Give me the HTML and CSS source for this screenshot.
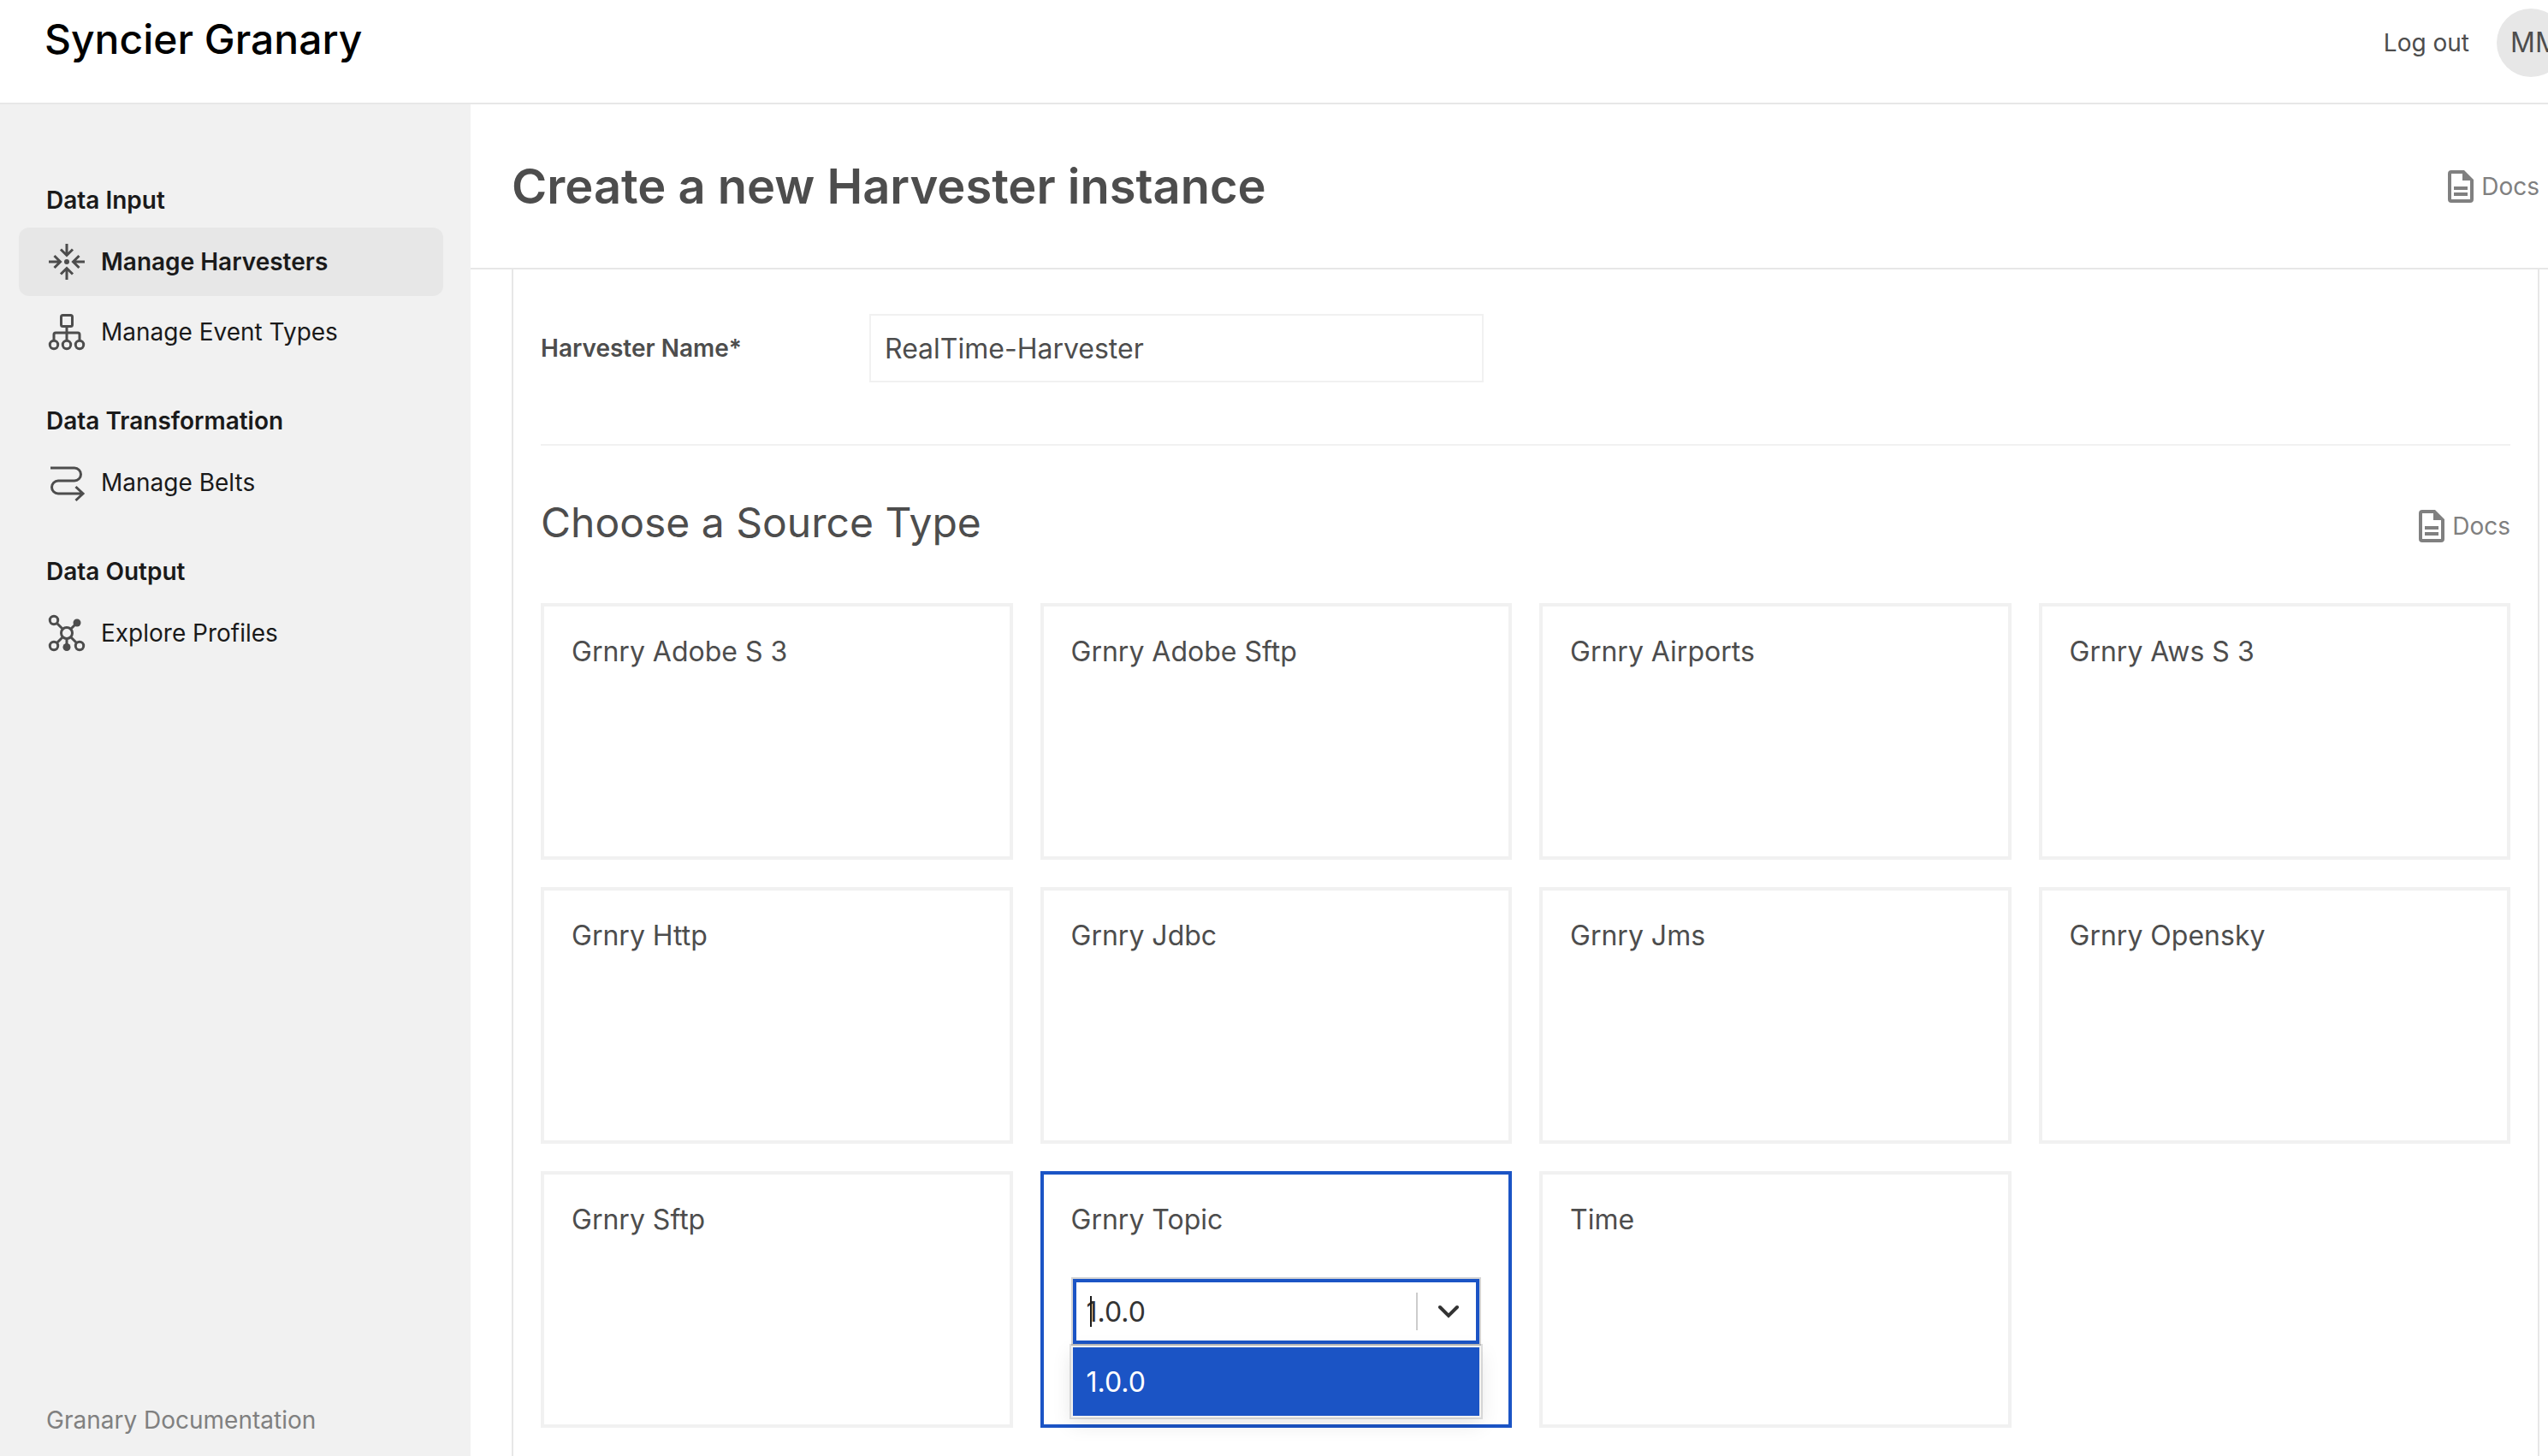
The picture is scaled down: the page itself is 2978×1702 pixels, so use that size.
FILE: index.html
```html
<!DOCTYPE html>
<html lang="en">
<head>
<meta charset="utf-8">
<title>Syncier Granary</title>
<link rel="stylesheet" href="styles.css">
</head>
<body>
<svg class="sprite" aria-hidden="true">
  <symbol id="icon-docs" viewBox="0 0 30 38">
    <path fill-rule="evenodd" d="M4 0H19L30 11V34a4 4 0 0 1-4 4H4a4 4 0 0 1-4-4V4a4 4 0 0 1 4-4ZM4 4V34H26V12H17V4ZM7 19H23V23H7ZM7 26H23V30H7Z"/>
  </symbol>
</svg>
<header class="topbar">
  <a class="brand" href="#">Syncier Granary</a>
  <div class="account">
    <button class="logout" type="button">Log out</button>
    <span class="avatar">MM</span>
  </div>
</header>
<div class="layout">
  <aside class="sidebar">
    <nav class="nav">
      <section class="nav-group">
        <h2 class="nav-title">Data Input</h2>
        <a class="nav-item nav-item-active" href="#">
          <svg class="nav-icon" viewBox="0 0 48 48"><circle class="solid" cx="24" cy="24" r="3"/><path d="M24 3V16M17 9.500L24 16.500L31 9.500M24 45V32M17 38.500L24 31.500L31 38.500M3 24H16M9.500 17L16.500 24L9.500 31M45 24H32M38.500 17L31.500 24L38.500 31"/></svg>
          Manage Harvesters
        </a>
        <a class="nav-item" href="#">
          <svg class="nav-icon" viewBox="0 0 48 48"><rect x="17.500" y="4.500" width="13" height="13" rx="2"/><path d="M24 17.500V33M9 33V27a2 2 0 0 1 2-2H37a2 2 0 0 1 2 2V33"/><circle cx="9" cy="39" r="4.700"/><circle cx="24" cy="39" r="4.700"/><circle cx="39" cy="39" r="4.700"/></svg>
          Manage Event Types
        </a>
      </section>
      <section class="nav-group">
        <h2 class="nav-title">Data Transformation</h2>
        <a class="nav-item" href="#">
          <svg class="nav-icon" viewBox="0 0 48 48"><path d="M5 7H33a7.500 7.500 0 0 1 0 15H14a7.500 7.500 0 0 0 0 15H43M34.500 29L43 37L34.500 45"/></svg>
          Manage Belts
        </a>
      </section>
      <section class="nav-group">
        <h2 class="nav-title">Data Output</h2>
        <a class="nav-item" href="#">
          <svg class="nav-icon" viewBox="0 0 48 48"><circle cx="24" cy="24" r="6.500"/><circle cx="9" cy="9" r="4.700"/><circle cx="9" cy="39" r="4.700"/><circle cx="39" cy="39" r="4.700"/><circle class="solid" cx="36" cy="12" r="4.500"/><circle class="solid" cx="24" cy="40.500" r="4.500"/><path d="M12.500 12.500L19.500 19.500M35 13L28.500 19.500M19.500 28.500L12.500 35.500M28.500 28.500L35.500 35.500M24 30.500V38"/></svg>
          Explore Profiles
        </a>
      </section>
    </nav>
    <a class="nav-footer" href="#">Granary Documentation</a>
  </aside>
  <main class="main">
    <div class="page-head">
      <h1 class="page-title">Create a new Harvester instance</h1>
      <a class="docs" href="#"><svg class="docs-icon"><use href="#icon-docs"/></svg>Docs</a>
    </div>
    <form class="panel">
      <div class="field">
        <label class="field-label" for="harvester-name">Harvester Name*</label>
        <input class="field-input" id="harvester-name" type="text" value="RealTime-Harvester">
      </div>
      <div class="section-head">
        <h2 class="section-title">Choose a Source Type</h2>
        <a class="docs" href="#"><svg class="docs-icon"><use href="#icon-docs"/></svg>Docs</a>
      </div>
      <div class="cards">
        <div class="card">Grnry Adobe S 3</div>
        <div class="card">Grnry Adobe Sftp</div>
        <div class="card">Grnry Airports</div>
        <div class="card">Grnry Aws S 3</div>
        <div class="card">Grnry Http</div>
        <div class="card">Grnry Jdbc</div>
        <div class="card">Grnry Jms</div>
        <div class="card">Grnry Opensky</div>
        <div class="card">Grnry Sftp</div>
        <div class="card card-selected">
          <label for="version">Grnry Topic</label>
          <div class="picker">
            <select class="picker-select" id="version"><option>1.0.0</option></select>
            <span class="picker-caret"></span>
            <span class="picker-arrow">
              <svg class="chevron" viewBox="0 0 24 16"><path d="M2 3L12 13L22 3"/></svg>
            </span>
            <ul class="picker-menu" role="listbox">
              <li class="picker-option" role="option" aria-selected="true">1.0.0</li>
            </ul>
          </div>
        </div>
        <div class="card">Time</div>
      </div>
    </form>
  </main>
</div>
</body>
</html>
```
FILE: styles.css
```css
* {
  box-sizing: border-box;
}

body {
  display: flex;
  flex-direction: column;
  height: 100vh;
  margin: 0;
  overflow: hidden;
  background: #fff;
  color: #4d4d4d;
  font-family: Inter, "Liberation Sans", sans-serif;
  font-size: 28px;
  line-height: 32px;
}

a {
  color: inherit;
  text-decoration: none;
}

h1,
h2,
ul {
  margin: 0;
  padding: 0;
}

.sprite {
  position: absolute;
  width: 0;
  height: 0;
}

/* Top bar */
.topbar {
  display: flex;
  flex: none;
  justify-content: space-between;
  height: 122px;
  padding-left: 52px;
  overflow: hidden;
  border-bottom: 2px solid #e7e7e7;
}

.brand {
  padding-top: 14px;
  color: #000;
  font-size: 48px;
  font-weight: 500;
  line-height: 64px;
}

.account {
  display: flex;
  align-items: center;
  gap: 32px;
  height: 80px;
  margin-top: 10px;
  margin-right: -20px;
}

.logout {
  padding: 0;
  border: 0;
  background: none;
  color: inherit;
  font: inherit;
}

.avatar {
  width: 80px;
  height: 80px;
  padding-left: 16px;
  border-radius: 50%;
  background: #e7e7e7;
  font-size: 32px;
  line-height: 80px;
}

.layout {
  display: flex;
  flex: 1;
  min-height: 0;
}

/* Sidebar */
.sidebar {
  display: flex;
  flex: none;
  flex-direction: column;
  justify-content: space-between;
  width: 550px;
  padding: 96px 32px 26px 22px;
  background: #f1f1f1;
  color: #1a1a1a;
}

.nav {
  display: flex;
  flex-direction: column;
  gap: 48px;
}

.nav-group {
  display: flex;
  flex-direction: column;
  gap: 2px;
}

.nav-title {
  margin-bottom: 14px;
  padding-left: 32px;
  font-size: 28px;
  font-weight: 600;
}

.nav-item {
  display: flex;
  align-items: center;
  gap: 16px;
  height: 80px;
  padding-left: 32px;
  border-radius: 12px;
}

.nav-item-active {
  background: #e7e7e7;
  font-weight: 600;
}

.nav-icon {
  width: 48px;
  height: 48px;
  fill: none;
  stroke: #4d4d4d;
  stroke-width: 3;
}

.nav-icon .solid {
  fill: #4d4d4d;
  stroke: none;
}

.nav-footer {
  padding-left: 32px;
  color: #808080;
}

/* Main column */
.main {
  display: flex;
  flex: 1;
  flex-direction: column;
  min-width: 0;
}

.page-head {
  display: flex;
  flex: none;
  align-items: center;
  justify-content: space-between;
  height: 193px;
  padding: 0 10px 0 48px;
  border-bottom: 2px solid #e7e7e7;
}

.page-title {
  font-size: 56px;
  font-weight: 600;
  line-height: 68px;
}

.docs {
  display: flex;
  align-items: center;
  gap: 9px;
  height: 60px;
  color: #808080;
}

.docs-icon {
  width: 30px;
  height: 38px;
  fill: #808080;
}

.panel {
  flex: 1;
  min-height: 0;
  margin: 0 10px 0 48px;
  padding: 52px 32px 0;
  border: solid #e7e7e7;
  border-width: 0 2px;
}

.field {
  display: flex;
  align-items: center;
  padding-bottom: 72px;
  border-bottom: 2px solid #f1f1f1;
}

.field-label {
  width: 384px;
  font-weight: 600;
}

.field-input {
  width: 718px;
  height: 80px;
  padding: 0 16px;
  border: 2px solid #f1f1f1;
  background: #fff;
  color: inherit;
  font: inherit;
  font-size: 32px;
}

.section-head {
  display: flex;
  align-items: flex-end;
  justify-content: space-between;
  padding: 56px 0 60px;
}

.section-title {
  font-size: 48px;
  font-weight: 400;
  line-height: 68px;
}

/* Source type cards */
.cards {
  display: grid;
  grid-template-columns: repeat(4, 1fr);
  grid-auto-rows: 300px;
  gap: 32px;
}

.card {
  display: flex;
  flex-direction: column;
  gap: 46px;
  padding: 32px;
  border: 4px solid #f1f1f1;
  font-size: 32px;
  line-height: 42px;
}

.card-selected {
  border-color: #1b54c5;
}

.picker {
  position: relative;
  height: 80px;
  border: 2px solid #d4d4d4;
  color: #333;
}

.picker-select {
  display: block;
  width: 100%;
  height: 76px;
  padding: 2px 12px 0;
  border: 4px solid #1b54c5;
  border-radius: 0;
  appearance: none;
  background: #fff;
  color: inherit;
  font: inherit;
}

.picker-caret {
  position: absolute;
  top: 20px;
  left: 20px;
  width: 2px;
  height: 36px;
  background: #1a1a1a;
}

.picker-arrow {
  position: absolute;
  top: 16px;
  right: 4px;
  display: grid;
  width: 70px;
  height: 44px;
  padding-left: 4px;
  place-items: center;
  border-left: 2px solid #ccc;
  pointer-events: none;
}

.chevron {
  width: 24px;
  height: 16px;
  fill: none;
  stroke: #333;
  stroke-linecap: round;
  stroke-width: 4;
}

.picker-menu {
  position: absolute;
  top: 100%;
  right: -2px;
  left: -2px;
  margin-top: 2px;
  border: 2px solid #f1f1f1;
  box-shadow: 0 0 0 2px rgba(0, 0, 0, 0.12), 0 8px 22px rgba(0, 0, 0, 0.1);
  list-style: none;
}

.picker-option {
  padding: 20px 16px 18px;
  background: #1b54c5;
  color: #fff;
}
```
